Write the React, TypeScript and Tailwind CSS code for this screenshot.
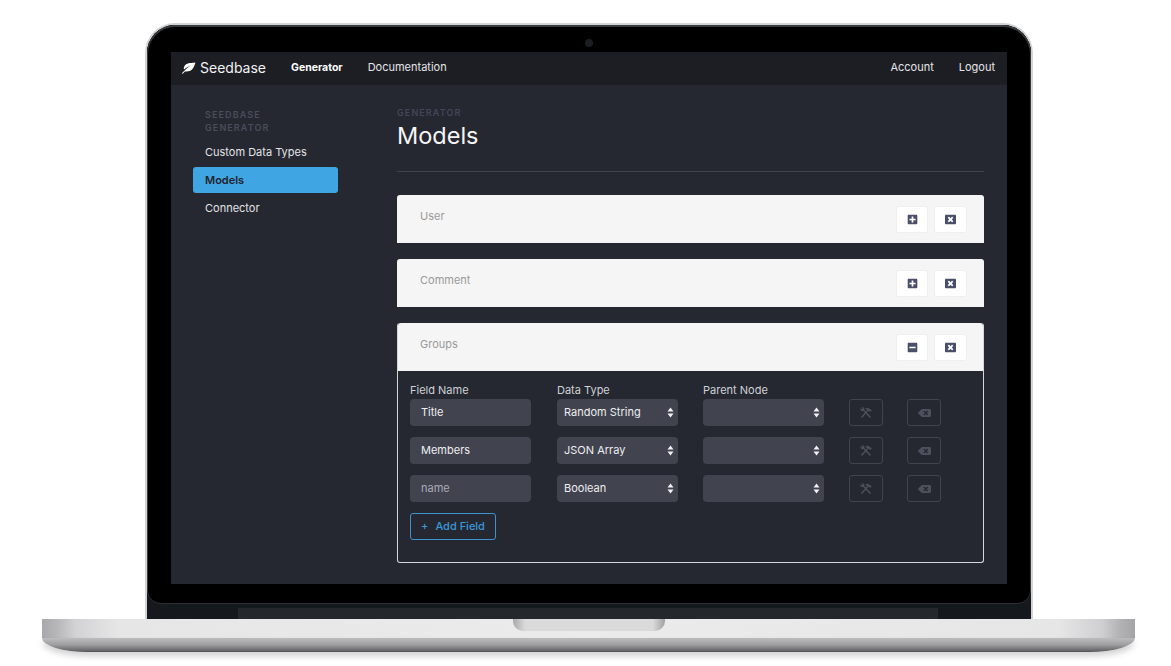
import { FaBackspace, FaMinusSquare, FaPlusSquare, FaWindowClose } from "react-icons/fa";

const rows = [
  { name: "Title", type: "Random String" },
  { name: "Members", type: "JSON Array" },
  { name: "name", type: "Boolean", placeholder: true },
];

function Arrows() {
  return (
    <svg width="7" height="11" viewBox="0 0 7 11" className="shrink-0">
      <path d="M3.5 0.5 L6.5 4.5 H0.5 Z M3.5 10.5 L0.5 6.5 H6.5 Z" fill="#f1f1f3" />
    </svg>
  );
}

function Leaf() {
  return (
    <svg width="15" height="12" viewBox="0 0 15 12" className="shrink-0">
      <path
        d="M14.5 0.5 C11 1.2 6.5 0.6 4.2 3 C2.8 4.5 2.6 6.2 3 7.6 C5 5.6 7.5 4.2 10 3.4 C7.2 5 4.4 7.4 0.8 11.2 L1.8 11.8 L3.8 9.4 C6 9.8 9 9.6 11 7.6 C13 5.6 13.4 3 14.5 0.5 Z"
        fill="#ffffff"
      />
    </svg>
  );
}

function Tools() {
  return (
    <svg width="14" height="13" viewBox="0 0 14 13" fill="none" stroke="#4f515e" className="shrink-0">
      <path d="M2.5 11.5 L8.8 4.4" strokeWidth="1.4" />
      <path d="M6.4 2.6 C8 1.6 9.6 1.8 10.8 3.2 L12.6 4.2 L11.6 5.6 L9.8 4.8 L8.6 4.6 Z" fill="#4f515e" strokeWidth="0.3" />
      <path d="M11.5 11.5 L4.8 4.4" strokeWidth="1.4" />
      <path d="M1.4 2.4 L2.8 3.6 L3.8 2.6 L2.8 1.2 C4.4 1 5.6 2.2 5.2 4 L4.2 5 C2.6 5.4 1.2 4 1.4 2.4 Z" fill="#4f515e" strokeWidth="0.3" />
    </svg>
  );
}

function SelectBox({ label }: { label?: string }) {
  return (
    <div className="flex h-[27px] w-[121px] items-center justify-between rounded-[4px] bg-[#41434f] pl-[7px] pr-[4px] text-[11px] text-[#eeeef0]">
      <span>{label}</span>
      <Arrows />
    </div>
  );
}

function Card({ title, open }: { title: string; open?: boolean }) {
  return (
    <div
      className={`flex h-[48px] items-start justify-between rounded-t-[3px] bg-[#f5f5f5] pt-[11px] ${
        open ? "pl-[22px] pr-[16px]" : "pl-[23px] pr-[17px]"
      }`}
    >
      <span className="mt-[1px] text-[11px] leading-[18px] text-[#9a9a9a]">{title}</span>
      <div className="flex gap-[6px]">
        <button className="flex h-[27px] w-[32px] items-center justify-center rounded-[3px] border border-[#efefef] bg-white">
          {open ? (
            <FaMinusSquare className="h-[11px] w-[11px] text-[#4a4f69]" />
          ) : (
            <FaPlusSquare className="h-[11px] w-[11px] text-[#4a4f69]" />
          )}
        </button>
        <button className="flex h-[27px] w-[33px] items-center justify-center rounded-[3px] border border-[#efefef] bg-white">
          <FaWindowClose className="h-[11px] w-[11px] text-[#4a4f69]" />
        </button>
      </div>
    </div>
  );
}

export default function App() {
  return (
    <div className="flex h-[666px] w-[1171px] flex-col items-start overflow-hidden bg-white pl-[42px] pt-[23px] font-['Inter','Liberation_Sans',sans-serif]">
      {/* lid */}
      <div className="ml-[103px] flex h-[596px] w-[888px] flex-col rounded-t-[30px] border-x-[2px] border-t-[2px] border-[#d2d3d5] bg-[#15181d]">
        <div className="flex h-[579px] shrink-0 flex-col rounded-b-[14px] rounded-t-[28px] border-b border-[#2c2e33] bg-black px-[24px] shadow-[inset_0_1px_0_1px_#3a3b3e]">
          <div className="flex h-[27px] shrink-0 items-center justify-center pt-[9px]">
            <div className="h-[8px] w-[8px] rounded-full bg-[#1b1d22]" />
          </div>
          {/* screen */}
          <div className="flex h-[532px] flex-col bg-[#252830]">
            <nav className="flex h-[33px] shrink-0 items-center bg-[#1c1e23] pb-[2px] pl-[10px] pr-[12px] text-[11px] text-[#e4e5e8]">
              <Leaf />
              <span className="ml-[4px] text-[14px] text-[#f2f2f3]">Seedbase</span>
              <span className="ml-[25px] text-[10.5px] font-bold text-white">Generator</span>
              <span className="ml-[25px]">Documentation</span>
              <span className="ml-auto">Account</span>
              <span className="ml-[25px]">Logout</span>
            </nav>
            <div className="flex min-h-0 flex-1">
              <aside className="w-[226px] shrink-0 pl-[22px] pt-[23px]">
                <div className="pl-[12px] text-[9px] font-semibold uppercase leading-[13px] tracking-[1.1px] text-[#4a4d5b]">
                  Seedbase
                  <br />
                  Generator
                </div>
                <div className="mb-[1px] mt-[4px] flex h-[28px] items-center pl-[12px] text-[11px] text-[#e2e3e6]">Custom Data Types</div>
                <div className="flex h-[26px] w-[145px] items-center rounded-[3px] bg-[#3fa6e3] pl-[12px] text-[11px] font-semibold text-[#20232b]">
                  Models
                </div>
                <div className="mt-[1px] flex h-[28px] items-center pl-[12px] text-[11px] text-[#e2e3e6]">Connector</div>
              </aside>
              <main className="w-[587px] shrink-0 pt-[22px]">
                <div className="text-[9px] font-semibold uppercase leading-[11px] tracking-[1.1px] text-[#43465a]">Generator</div>
                <h1 className="mt-[3px] text-[23.5px] leading-[29px] text-[#f5f5f6]">Models</h1>
                <div className="mt-[21px] h-px bg-[#41434c]" />
                <div className="mt-[23px] flex flex-col gap-[16px]">
                  <Card title="User" />
                  <Card title="Comment" />
                  <div className="h-[240px] rounded-[3px] border-x border-b border-[#d5d6d8]">
                    <Card title="Groups" open />
                    <div className="pl-[12px] pt-[11px]">
                      <div className="flex text-[11px] leading-[17px] text-[#cfd1d6]">
                        <span className="w-[147px]">Field Name</span>
                        <span className="w-[146px]">Data Type</span>
                        <span>Parent Node</span>
                      </div>
                      <div className="flex flex-col gap-[11px]">
                        {rows.map((row) => (
                          <div key={row.name} className="flex items-center">
                            <div
                              className={`flex h-[27px] w-[121px] items-center rounded-[4px] bg-[#41434f] pl-[11px] text-[11px] ${
                                row.placeholder ? "text-[#a9abb4]" : "text-[#eeeef0]"
                              }`}
                            >
                              {row.name}
                            </div>
                            <div className="ml-[26px]">
                              <SelectBox label={row.type} />
                            </div>
                            <div className="ml-[25px]">
                              <SelectBox />
                            </div>
                            <button className="ml-[25px] flex h-[27px] w-[34px] items-center justify-center rounded-[3px] border border-[#41434f]">
                              <Tools />
                            </button>
                            <button className="ml-[24px] flex h-[27px] w-[34px] items-center justify-center rounded-[3px] border border-[#41434f]">
                              <FaBackspace className="h-[12px] w-[13px] text-[#4d4f5c]" />
                            </button>
                          </div>
                        ))}
                      </div>
                      <button className="mt-[11px] flex h-[27px] w-[86px] items-center justify-center gap-[7px] rounded-[3px] border border-[#3f93cc] text-[11px] font-medium text-[#3b97d8]">
                        <span>+</span>
                        <span>Add Field</span>
                      </button>
                    </div>
                  </div>
                </div>
              </main>
            </div>
          </div>
        </div>
        <div className="ml-[91px] mt-auto h-[11px] w-[700px] bg-[#24272c]" />
      </div>
      {/* base */}
      <div className="h-[19px] w-[1093px] shrink-0 bg-[linear-gradient(90deg,#a9a9ab_0%,#b8b8ba_1.5%,#d2d2d4_3%,#e6e6e7_7%,#ebebec_50%,#e6e6e7_93%,#cfcfd1_97%,#b4b4b6_98.5%,#a4a4a6_100%)]">
        <div className="mx-auto h-[12px] w-[152px] rounded-b-[10px] bg-[linear-gradient(90deg,#a8a8aa_0%,#dadadb_8%,#dadadb_92%,#a0a0a2_100%)]" />
      </div>
      <div className="h-[14px] w-[1093px] shrink-0 rounded-bl-[46px_14px] rounded-br-[46px_14px] bg-[linear-gradient(180deg,#bdbdbf_0%,#9d9da0_50%,#68686b_90%,#4a4a4c_100%)] shadow-[0_4px_6px_rgba(0,0,0,0.18)]" />
    </div>
  );
}
